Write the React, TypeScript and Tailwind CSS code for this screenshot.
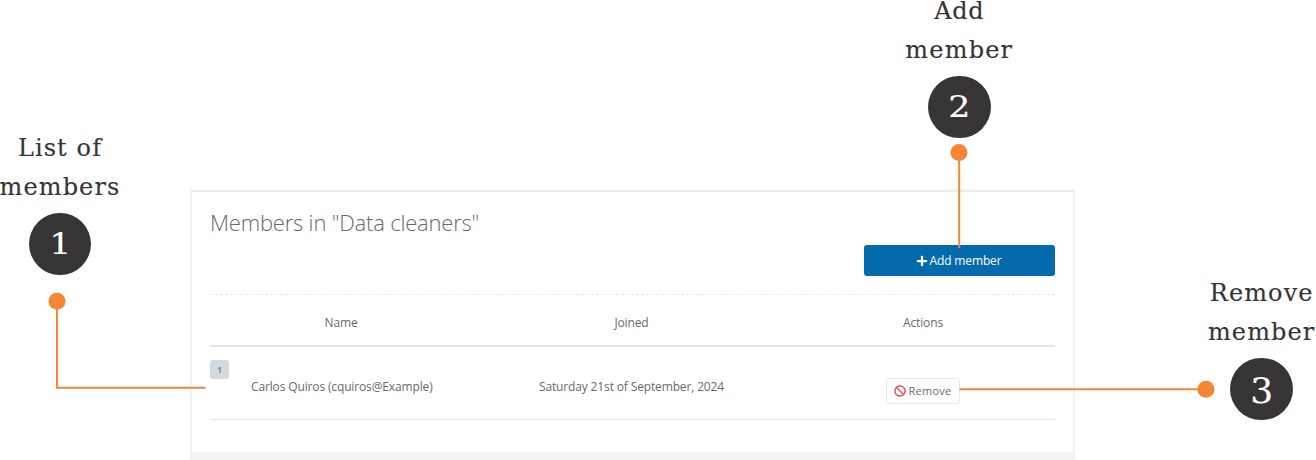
import React from "react";
import { FaPlus, FaBan } from "react-icons/fa";

type CalloutProps = {
  place: string;
  lines: { text: string; style: string }[];
  digit: string;
  digitStyle: string;
};

function Callout({ place, lines, digit, digitStyle }: CalloutProps) {
  return (
    <div className={`absolute flex w-[140px] flex-col items-center font-['DejaVu_Serif',serif] text-[#373435] ${place}`}>
      {lines.map((l) => (
        <span key={l.text} className={`block h-[39px] whitespace-nowrap text-[24px] leading-[39px] [-webkit-text-stroke:0.15px_#373435] ${l.style}`}>
          {l.text}
        </span>
      ))}
      <span className="mt-[5.5px] flex size-[62.5px] items-center justify-center rounded-full bg-[#373435] text-white">
        <span className={`block leading-none [-webkit-text-stroke:0.15px_white] ${digitStyle}`}>{digit}</span>
      </span>
    </div>
  );
}

export default function App() {
  return (
    <div className="relative h-[460px] w-[1316px] overflow-hidden bg-white pl-[190px] pt-[189px] font-['Open_Sans',sans-serif] text-[12px] tracking-[-0.14px] text-[#676a6c]">
      <main className="h-[271px] w-[885px] bg-[#f3f3f4] px-[2px] pt-[2px]">
        <section className="h-[261px] border-t border-[#e7eaec] bg-white px-[18px] pt-[14px]">
          <h2 className="h-[39px] whitespace-nowrap text-[22px] font-light leading-[32px] tracking-[-0.2px]">Members in "Data cleaners"</h2>
          <div className="flex justify-end">
            <button className="flex h-[31px] w-[191px] items-center justify-center gap-[2px] rounded-[3px] bg-[#036aab] pr-[2px] text-white">
              <FaPlus size={12} />
              <span>Add member</span>
            </button>
          </div>
          <div className="mt-[18px] border-t border-dashed border-[#e7eaec]" />
          <div className="grid h-[52px] grid-cols-[262px_319px_264px] items-center border-b-2 border-[#e4e5e7] pt-[6px] text-center">
            <span>Name</span>
            <span>Joined</span>
            <span>Actions</span>
          </div>
          <div className="grid h-[73px] grid-cols-[262px_319px_264px] items-center border-b border-[#e4e5e7] text-center">
            <div className="flex h-full items-start pt-[13px]">
              <span className="flex h-[19px] w-[19px] items-center justify-center rounded-[3px] bg-[#d1dade] text-[8px] font-semibold">1</span>
              <span className="ml-[22px] mt-[17px] whitespace-nowrap leading-[20px]">Carlos Quiros (cquiros@Example)</span>
            </div>
            <span className="pt-[7px]">Saturday 21st of September, 2024</span>
            <div className="flex justify-center pt-[15px]">
              <button className="flex h-[26px] w-[74px] items-center justify-center gap-[3px] rounded-[3px] border border-[#e7eaec] bg-white pr-px">
                <FaBan size={12} className="text-[#ed5565]" />
                <span className="pt-px text-[11px] tracking-[0.25px]">Remove</span>
              </button>
            </div>
          </div>
        </section>
      </main>

      <svg className="absolute left-0 top-0" width="1316" height="460" fill="none" stroke="#f58634" strokeWidth="2">
        <path d="M57 301V387.7H205.500M959.200 152V248M959.500 389.200H1206" />
        <g fill="#f58634" stroke="none">
          <circle cx="57" cy="301.300" r="8.500" />
          <circle cx="959" cy="152.500" r="8.500" />
          <circle cx="1206" cy="389.200" r="8.500" />
        </g>
      </svg>

      <Callout
        place="left-[-10px] top-[129px]"
        lines={[
          { text: "List of", style: "tracking-[1.1px]" },
          { text: "members", style: "tracking-[1.1px]" },
        ]}
        digit="1"
        digitStyle="pt-[2px] text-[29px] scale-x-120"
      />
      <Callout
        place="left-[889.3px] top-[-8px]"
        lines={[
          { text: "Add", style: "tracking-[0.7px]" },
          { text: "member", style: "tracking-[1.2px]" },
        ]}
        digit="2"
        digitStyle="pt-[2px] text-[29px] scale-x-120"
      />
      <Callout
        place="left-[1191.7px] top-[274px]"
        lines={[
          { text: "Remove", style: "tracking-[1.1px]" },
          { text: "member", style: "tracking-[1.1px]" },
        ]}
        digit="3"
        digitStyle="text-[36px] pt-[4px]"
      />
    </div>
  );
}
